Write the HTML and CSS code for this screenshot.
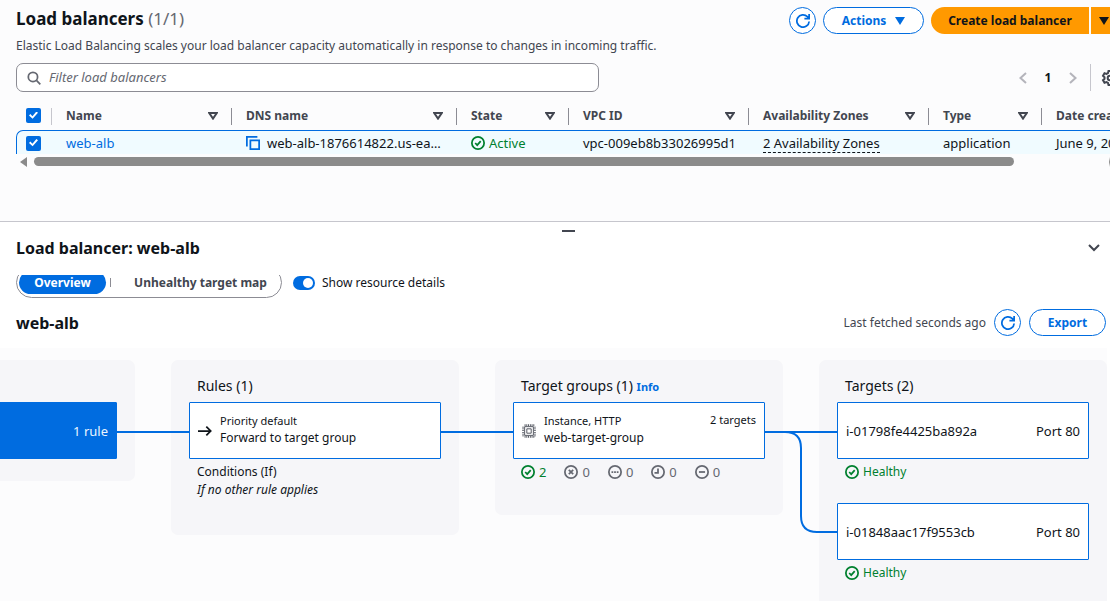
FILE: index.html
```html
<!DOCTYPE html>
<html lang="en">
<head>
<meta charset="utf-8">
<title>Load balancers</title>
<link rel="stylesheet" href="styles.css">
</head>
<body>
<svg class="sprite" aria-hidden="true">
  <symbol id="refresh" viewBox="0 0 16 16"><path d="M15 8.500A7 7 0 1 1 13 3.100L14.800 5M15 0v5.200H9.600"/></symbol>
  <symbol id="ok" viewBox="0 0 16 16"><circle cx="8" cy="8" r="7"/><path d="M4.800 8l2.300 2.400 4-4.600"/></symbol>
  <symbol id="sort" viewBox="0 0 10 8"><path d="M1.200 1h7.600L5 6.600z"/></symbol>
  <symbol id="caret" viewBox="0 0 10 8"><path d="M0 0h10L5 8z"/></symbol>
</svg>

<main class="list">
  <header class="row head">
    <h1>Load balancers <span class="count">(1/1)</span></h1>
    <div class="row actions">
      <button class="btn round" aria-label="Refresh"><svg class="icon s14"><use href="#refresh"/></svg></button>
      <button class="btn menu">Actions <svg class="caret"><use href="#caret"/></svg></button>
      <div class="split">
        <button class="primary create">Create load balancer</button>
        <button class="primary more" aria-label="More create options"><svg class="caret"><use href="#caret"/></svg></button>
      </div>
    </div>
  </header>
  <p class="description">Elastic Load Balancing scales your load balancer capacity automatically in response to changes in incoming traffic.</p>
  <div class="row tools">
    <label class="filter">
      <svg class="icon s14" viewBox="0 0 16 16"><circle cx="6.800" cy="6.800" r="5.300"/><path d="M10.800 10.800l4.400 4.400"/></svg>
      <input type="text" placeholder="Filter load balancers" aria-label="Filter load balancers">
    </label>
    <nav class="row pages" aria-label="Pagination">
      <button class="plain" aria-label="Previous page"><svg class="chev" viewBox="0 0 8 12"><path d="M7 1L1.500 6 7 11"/></svg></button>
      <b>1</b>
      <button class="plain" aria-label="Next page"><svg class="chev" viewBox="0 0 8 12"><path d="M1 1l5.500 5L1 11"/></svg></button>
      <button class="plain gear" aria-label="Preferences"><svg class="icon s16" viewBox="0 0 16 16"><circle cx="8" cy="8" r="2.300"/><path d="M6.500 1h3l.5 2 1.500.9 2-.6 1.500 2.600L13.500 7.300v1.500l1.500 1.400-1.500 2.500-2-.6-1.500.9-.5 2h-3L6 13l-1.500-.9-2 .6L1 10.200l1.500-1.400V7.300L1 5.900l1.500-2.600 2 .6L6 3z"/></svg></button>
    </nav>
  </div>

  <div class="table-wrap">
    <table>
      <colgroup><col class="c-check"><col class="c-std"><col class="c-dns"><col class="c-state"><col class="c-std"><col class="c-std"><col class="c-type"><col class="c-std"></colgroup>
      <thead>
        <tr>
          <th><input class="check" type="checkbox" checked aria-label="Select all"></th>
          <th><div class="th">Name<svg class="sort"><use href="#sort"/></svg></div></th>
          <th><div class="th">DNS name<svg class="sort"><use href="#sort"/></svg></div></th>
          <th><div class="th">State<svg class="sort"><use href="#sort"/></svg></div></th>
          <th><div class="th">VPC ID<svg class="sort"><use href="#sort"/></svg></div></th>
          <th><div class="th">Availability Zones<svg class="sort"><use href="#sort"/></svg></div></th>
          <th><div class="th">Type<svg class="sort"><use href="#sort"/></svg></div></th>
          <th><div class="th">Date created<svg class="sort"><use href="#sort"/></svg></div></th>
        </tr>
      </thead>
      <tbody>
        <tr>
          <td><input class="check" type="checkbox" checked aria-label="Select web-alb"></td>
          <td><a href="#web-alb">web-alb</a></td>
          <td><div class="row dns"><svg class="icon s14 copy" viewBox="0 0 16 16"><path d="M5 5h10v10H5z"/><path d="M1 12V1h12"/></svg><span>web-alb-1876614822.us-ea…</span></div></td>
          <td><div class="row status"><svg class="icon s14"><use href="#ok"/></svg>Active</div></td>
          <td>vpc-009eb8b33026995d1</td>
          <td><span class="zones">2 Availability Zones</span></td>
          <td>application</td>
          <td>June 9, 2025</td>
        </tr>
      </tbody>
    </table>
  </div>
  <div class="row scrollbar" aria-hidden="true"><i class="arrow"></i><i class="thumb"></i><i class="arrow end"></i></div>
</main>

<section class="panel">
  <div class="handle"></div>
  <div class="row panel-head">
    <h2>Load balancer: web-alb</h2>
    <button class="plain" aria-label="Collapse panel"><svg class="fold" viewBox="0 0 12 8"><path d="M1 1l5 5 5-5"/></svg></button>
  </div>
  <div class="row view">
    <div class="row segments">
      <button class="seg on">Overview</button>
      <button class="seg">Unhealthy target map</button>
    </div>
    <label class="row toggle"><input type="checkbox" role="switch" checked>Show resource details</label>
  </div>
  <div class="row map-head">
    <h2>web-alb</h2>
    <div class="row fetched">
      <span>Last fetched seconds ago</span>
      <button class="btn round" aria-label="Refresh map"><svg class="icon s14"><use href="#refresh"/></svg></button>
      <button class="btn export">Export</button>
    </div>
  </div>

  <div class="map">
    <section class="group listeners">
      <div class="card solid line"><span class="end">1 rule</span></div>
    </section>
    <section class="group rules">
      <h3>Rules (1)</h3>
      <div class="card line">
        <svg class="icon s14 dark" viewBox="0 0 16 16"><path d="M0 8h15M9.500 3l5 5-5 5"/></svg>
        <div class="info"><small>Priority default</small><span>Forward to target group</span></div>
      </div>
      <div class="note">Conditions (If)<br><em>If no other rule applies</em></div>
    </section>
    <section class="group targets-group">
      <h3>Target groups (1) <a class="info-link" href="#info">Info</a></h3>
      <div class="card">
        <svg class="icon s14 chip" viewBox="0 0 16 16"><path class="pins" d="M3 1.200h11M3 14.800h11M1.200 3v11M14.800 3v11"/><path d="M3 3h10v10H3z"/><path d="M5.500 5.500h5v5h-5z"/></svg>
        <div class="info"><small>Instance, HTTP</small><span>web-target-group</span></div>
        <small class="end top">2 targets</small>
        <svg class="branch" viewBox="0 0 72 104"><path d="M0 2h72M0 2h20q16 0 16 16v68q0 16 16 16h20"/></svg>
      </div>
      <div class="row counts">
        <span class="row status"><svg class="icon s14"><use href="#ok"/></svg>2</span>
        <span class="row"><svg class="icon s14" viewBox="0 0 16 16"><circle cx="8" cy="8" r="7"/><path d="M5.500 5.500l5 5M10.500 5.500l-5 5"/></svg>0</span>
        <span class="row"><svg class="icon s14" viewBox="0 0 16 16"><circle cx="8" cy="8" r="7"/><path d="M4 8h2M7 8h2M10 8h2"/></svg>0</span>
        <span class="row"><svg class="icon s14" viewBox="0 0 16 16"><circle cx="8" cy="8" r="7"/><path d="M8 4v5H4"/></svg>0</span>
        <span class="row"><svg class="icon s14" viewBox="0 0 16 16"><circle cx="8" cy="8" r="7"/><path d="M4.500 8h7"/></svg>0</span>
      </div>
    </section>
    <section class="group targets">
      <h3>Targets (2)</h3>
      <div class="card"><span class="id">i-01798fe4425ba892a</span><span class="end id">Port 80</span></div>
      <div class="row status health"><svg class="icon s14"><use href="#ok"/></svg>Healthy</div>
      <div class="card"><span class="id">i-01848aac17f9553cb</span><span class="end id">Port 80</span></div>
      <div class="row status health"><svg class="icon s14"><use href="#ok"/></svg>Healthy</div>
    </section>
  </div>
</section>
</body>
</html>
```
FILE: styles.css
```css
* { box-sizing: border-box; }
html, body { height: 100%; }
body {
  margin: 0;
  display: flex;
  flex-direction: column;
  overflow: hidden;
  background: #fcfcfd;
  color: #0f141a;
  font: 12px/18px "Noto Sans", "Open Sans", sans-serif;
}
button, input { font: inherit; color: inherit; margin: 0; padding: 0; }
button { cursor: pointer; }
h1, h2, h3, p { margin: 0; }
a { color: #006ce0; text-decoration: none; }
svg { flex: none; display: block; overflow: visible; }
.row { display: flex; align-items: center; }
.sprite { position: absolute; width: 0; height: 0; }
.icon { fill: none; stroke: currentColor; stroke-width: 2; }
.s14 { width: 14px; height: 14px; }
.s16 { width: 16px; height: 16px; }
.dark { color: #0f141a; }

/* Load balancer list */
.list { flex: none; height: 221px; padding: 7px 0 0 16px; overflow: hidden; }
.head { justify-content: space-between; height: 27px; }
h1 { padding-bottom: 3px; font-size: 17px; line-height: 24px; white-space: nowrap; }
.count { color: #656871; font-weight: 400; }
.actions { gap: 7px; margin-right: -14px; }
.btn {
  height: 27px;
  border: 1px solid #006ce0;
  border-radius: 14px;
  background: #fff;
  color: #006ce0;
  font-weight: 700;
}
.round { width: 27px; display: grid; place-items: center; }
.menu { width: 101px; display: flex; align-items: center; justify-content: center; gap: 9px; }
.caret { width: 10px; height: 8px; fill: currentColor; }
.split { display: flex; gap: 2px; }
.primary { height: 27px; border: 0; background: #ff9900; font-weight: 700; color: #0f141a; }
.create { width: 158px; border-radius: 14px 0 0 14px; }
.more { width: 33px; padding-left: 8px; border-radius: 0 14px 14px 0; }
.description { margin-top: 3px; color: #424650; white-space: nowrap; }
.tools { justify-content: space-between; margin-top: 8px; }
.filter {
  display: flex;
  align-items: center;
  gap: 8px;
  width: 583px;
  height: 29px;
  padding: 0 10px;
  border: 1px solid #8c8c94;
  border-radius: 7px;
  background: #fff;
  color: #656871;
}
.filter input { flex: 1; border: 0; outline: 0; background: none; font-size: 13px; padding-bottom: 2px; }
.filter input::placeholder { color: #656871; font-style: italic; opacity: 1; }
.pages { margin-right: -8px; }
.pages b { width: 42px; text-align: center; }
.plain { border: 0; background: none; color: #424650; }
.chev { width: 8px; height: 12px; fill: none; stroke: #b4b4bb; stroke-width: 2; }
.gear { margin-left: 13px; height: 27px; padding-left: 11px; border-left: 1px solid #c6c6cd; }

.table-wrap { height: 50px; margin-top: 12px; overflow: hidden; }
table { width: 1206px; table-layout: fixed; border-collapse: separate; border-spacing: 0; }
.c-check { width: 36px; }
.c-std { width: 180px; }
.c-dns { width: 225px; }
.c-state { width: 112px; }
.c-type { width: 113px; }
th, td { padding: 0 0 0 14px; text-align: left; white-space: nowrap; }
th:first-child, td:first-child { padding-left: 10px; }
th {
  height: 26px;
  padding-bottom: 3px;
  color: #424650;
  background: linear-gradient(#8c8c94, #8c8c94) right 4px / 1px 17px no-repeat;
}
th:first-child { background-image: linear-gradient(#c6c6cd, #c6c6cd); }
.th { display: flex; align-items: center; justify-content: space-between; padding-right: 14px; }
td { height: 36px; padding-bottom: 11px; background: #f0fbff; border-top: 1px solid #006ce0; font-size: 13px; }
td:first-child { border-left: 1px solid #006ce0; border-top-left-radius: 7px; padding-left: 9px; }
.sort { width: 10px; height: 8px; fill: none; stroke: #424650; stroke-width: 2; }
.check {
  display: grid;
  place-items: center;
  width: 15px;
  height: 15px;
  appearance: none;
  border-radius: 2px;
  background: #006ce0;
}
.check::after {
  content: "";
  width: 9px;
  height: 8px;
  background: #fff;
  clip-path: polygon(0 50%, 15% 32%, 38% 58%, 82% 0, 100% 16%, 40% 92%);
}
.dns { gap: 7px; }
.copy { color: #006ce0; }
.status { gap: 4px; color: #00802f; }
.zones { border-bottom: 1px dashed #0f141a; }
.scrollbar { height: 15px; padding-left: 4px; gap: 7px; }
.arrow { border: solid transparent; border-width: 5px 7px 5px 0; border-right-color: #8b8b8b; }
.thumb { flex: none; width: 980px; height: 9px; border-radius: 5px; background: #8b8b8b; }
.end { margin-left: auto; }
.arrow.end { border-width: 5px 0 5px 1px; border-color: transparent #8b8b8b; }

/* Split panel */
.panel {
  flex: 1;
  min-height: 0;
  display: flex;
  flex-direction: column;
  border-top: 1px solid #c6c6cd;
  background: #fff;
}
.handle { flex: none; align-self: center; width: 13px; height: 2px; margin: 8px 0 0 26px; background: #424650; }
.panel-head { justify-content: space-between; padding: 4px 10px 0 16px; }
h2 { font-size: 16px; line-height: 24px; }
.fold { width: 12px; height: 8px; fill: none; stroke: #424650; stroke-width: 2; }
.view { flex: none; height: 24px; margin: 15px 16px 0; gap: 11px; align-items: flex-start; overflow: hidden; }
.segments { width: 266px; height: 31px; margin-top: -8px; padding: 0 2px; border: 1px solid #8c8c94; border-radius: 16px; }
.seg { flex: 1; height: 23px; border: 0; border-radius: 12px; background: none; color: #424650; font-weight: 700; white-space: nowrap; }
.seg.on { flex: none; width: 87px; background: #006ce0; color: #fff; }
.seg.on + .seg { margin-left: 4px; padding-left: 12px; border-radius: 0; background: linear-gradient(#8c8c94, #8c8c94) left center / 1px 9px no-repeat; }
.toggle { gap: 7px; margin-top: -1px; }
.toggle input { appearance: none; width: 22px; height: 14px; padding: 2px; border-radius: 7px; background: #006ce0; }
.toggle input::after { content: ""; display: block; width: 10px; height: 10px; margin-left: 8px; border-radius: 50%; background: #fff; }
.map-head { flex: none; justify-content: space-between; height: 27px; margin: 10px 4px 12px 16px; }
.fetched { gap: 8px; color: #424650; }
.export { width: 77px; }

/* Resource map */
.map {
  flex: 1;
  min-height: 0;
  display: flex;
  justify-content: flex-end;
  align-items: flex-start;
  gap: 36px;
  margin-right: 3px;
  padding-top: 12px;
  overflow: hidden;
  background: #fcfcfd;
}
.group { flex: none; width: 288px; padding: 14px 18px 0; border-radius: 7px; background: #f6f6f9; }
h3 { height: 28px; padding: 2px 8px 0; font-size: 14px; font-weight: 400; line-height: 20px; white-space: nowrap; }
.info-link { font-size: 11px; font-weight: 700; }
.card {
  position: relative;
  display: flex;
  align-items: center;
  gap: 8px;
  height: 57px;
  padding: 0 8px;
  border: 1px solid #006ce0;
  border-radius: 1px;
  background: #fff;
  white-space: nowrap;
}
.id { font-size: 13px; }
.solid { background: #006ce0; color: #ebf5ff; font-size: 13px; }
.line::after { content: ""; position: absolute; left: 100%; top: 28px; width: 74px; height: 2px; background: #006ce0; }
.branch { position: absolute; z-index: 1; left: calc(100% + 1px); top: 27px; width: 72px; height: 104px; fill: none; stroke: #006ce0; stroke-width: 2; }
.info { padding-bottom: 2px; }
.info span, .info small { display: block; }
small { font-size: 11px; line-height: 16px; }
.top { align-self: flex-start; margin-top: 9px; }
.note { padding: 4px 8px 0; }
.chip { color: #424650; stroke-width: 1; }
.chip .pins { stroke-dasharray: 1 1; stroke-width: 2; }
.listeners { height: 121px; padding-top: 42px; }
.rules { height: 175px; }
.targets-group { height: 155px; }
.targets { height: 320px; }
.counts { gap: 18px; padding: 4px 8px 0; color: #656871; font-size: 13px; }
.counts .row { gap: 4px; }
.health { height: 18px; margin: 4px 8px 0; }
.health + .card { margin-top: 22px; }
```
